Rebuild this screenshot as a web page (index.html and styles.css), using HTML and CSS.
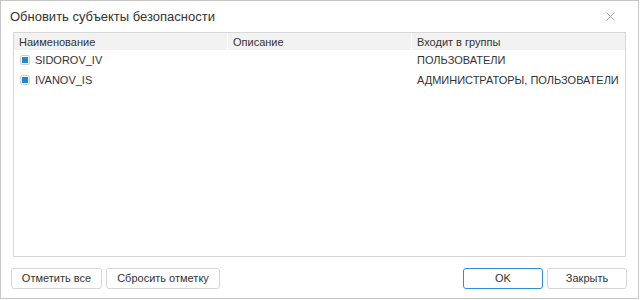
FILE: index.html
```html
<!doctype html>
<html lang="ru">
  <head>
    <meta charset="UTF-8" />
    <meta name="viewport" content="width=device-width, initial-scale=1.0" />
    <link rel="stylesheet" href="styles.css">
    <title>Обновить субъекты безопасности</title>
  </head>
  <body>
    <div class="dialog">
      <div class="dialog-head">
        <span class="dialog-title">Обновить субъекты безопасности</span>
        <span class="dialog-close">
          <svg width="9" height="9" viewBox="0 0 9 9">
            <path d="M0.5 0.5 L8.5 8.5 M8.5 0.5 L0.5 8.5" stroke="#a8a8a8" stroke-width="1" fill="none" />
          </svg>
        </span>
      </div>

      <div class="grid">
        <div class="grid-head">
          <div class="col col-name">Наименование</div>
          <div class="col col-desc">Описание</div>
          <div class="col col-groups">Входит в группы</div>
        </div>
        <div class="grid-row">
          <div class="col col-name"><span class="check"></span>SIDOROV_IV</div>
          <div class="col col-desc"></div>
          <div class="col col-groups">ПОЛЬЗОВАТЕЛИ</div>
        </div>
        <div class="grid-row">
          <div class="col col-name"><span class="check"></span>IVANOV_IS</div>
          <div class="col col-desc"></div>
          <div class="col col-groups">АДМИНИСТРАТОРЫ, ПОЛЬЗОВАТЕЛИ</div>
        </div>
      </div>

      <div class="dialog-foot">
        <div class="btn-group">
          <button class="btn btn-mark">Отметить все</button>
          <button class="btn btn-reset">Сбросить отметку</button>
        </div>
        <div class="btn-group">
          <button class="btn btn-wide btn-primary">OK</button>
          <button class="btn btn-wide">Закрыть</button>
        </div>
      </div>
    </div>
  </body>
</html>
```

FILE: styles.css
```css
html,
body {
  margin: 0;
  padding: 0;
}

body {
  font-family: "Liberation Sans", Arial, sans-serif;
  color: #333;
  background: #fff;
}

.dialog {
  width: 639px;
  height: 299px;
  border: 1px solid #c6c6c6;
  box-sizing: border-box;
  display: flex;
  flex-direction: column;
  background: #fff;
}

/* header */
.dialog-head {
  height: 31px;
  display: flex;
  align-items: center;
  justify-content: space-between;
  padding: 0 23px 0 9px;
}

.dialog-title {
  font-size: 13px;
  margin-top: -1px;
}

.dialog-close {
  display: flex;
  margin-top: -1px;
}

/* list */
.grid {
  margin: 0 12px;
  height: 225px;
  border: 1px solid #d7d7d7;
  box-sizing: border-box;
  font-size: 11px;
}

.grid-head,
.grid-row {
  display: flex;
}

.grid-head {
  height: 17px;
  background: #f2f2f2;
}

.grid-head .col + .col {
  border-left: 1px solid #fff;
}

.grid-row {
  height: 20px;
}

.col {
  padding-left: 5px;
  box-sizing: border-box;
  white-space: nowrap;
  display: flex;
  align-items: center;
}

.col-name {
  width: 213px;
}

.grid-head .col-name {
  padding-left: 5px;
}

.grid-row .col-name {
  padding-left: 6px;
}

.col-desc {
  width: 184px;
}

.col-groups {
  flex: 1;
}

.grid-row .col-desc,
.grid-row .col-groups {
  border-left: 1px solid transparent;
}

.check {
  width: 10px;
  height: 10px;
  border: 1px solid #cfcfcf;
  border-radius: 2px;
  box-sizing: border-box;
  background: #fff;
  display: flex;
  align-items: center;
  justify-content: center;
  margin-right: 5px;
}

.check::after {
  content: "";
  width: 6px;
  height: 6px;
  background: #1f87d0;
}

/* footer */
.dialog-foot {
  flex: 1;
  display: flex;
  align-items: center;
  justify-content: space-between;
  padding: 1px 11px 0 10px;
}

.btn-group {
  display: flex;
  gap: 4px;
}

.btn {
  height: 21px;
  padding: 0;
  font-family: inherit;
  font-size: 11px;
  color: #333;
  background: #fff;
  border: 1px solid #d6d6d6;
  border-radius: 3px;
  cursor: pointer;
}

.btn-mark {
  width: 91px;
}

.btn-reset {
  width: 114px;
}

.btn-wide {
  width: 80px;
}

.btn-primary {
  border-color: #2d8fd6;
}
```
